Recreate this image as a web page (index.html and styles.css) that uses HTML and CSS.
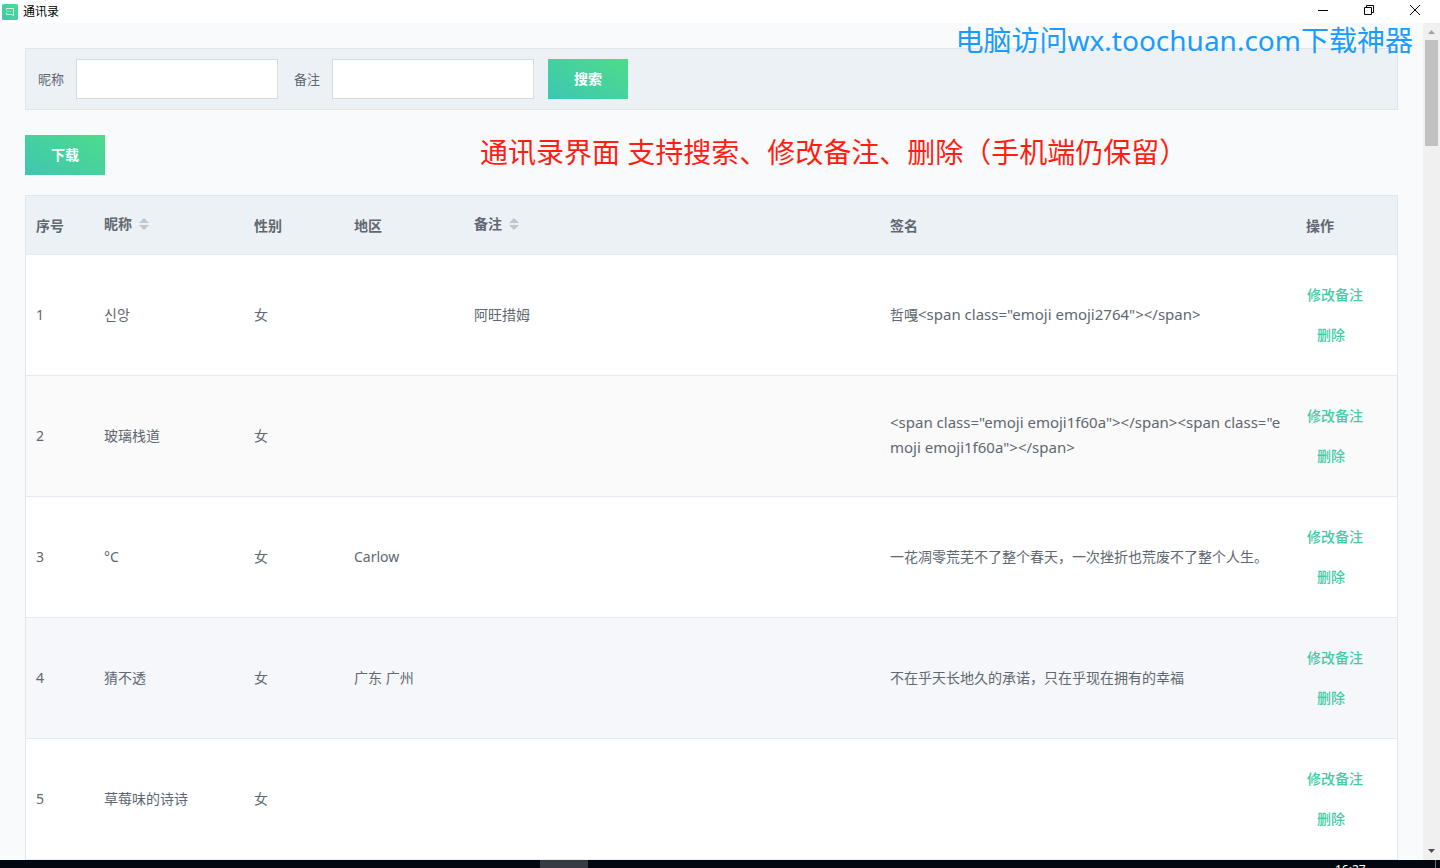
FILE: index.html
```html
<!DOCTYPE html>
<html lang="zh-CN">
<head>
<meta charset="utf-8">
<title>通讯录</title>
<link rel="stylesheet" href="styles.css">
</head>
<body>
<header class="titlebar">
  <svg class="app-icon" viewBox="0 0 16 16" aria-hidden="true">
    <defs><linearGradient id="brand" x1="0" y1="1" x2="1" y2="0"><stop offset="0" stop-color="#3ec6b0"/><stop offset="1" stop-color="#4ddc8c"/></linearGradient></defs>
    <rect width="16" height="16" rx="1.5" fill="url(#brand)"/>
    <path d="M4.500 6.500V4.500h7v7.500l-1.500-1.500h-5.500v-2M5.500 7.500h1M8 7.500h1" fill="none" stroke="#c5f3de" stroke-width="1"/>
  </svg>
  <h1 class="title">通讯录</h1>
  <div class="window-controls">
    <button type="button" class="window-button" aria-label="最小化"><svg viewBox="0 0 12 12"><path d="M1 6.500h10"/></svg></button>
    <button type="button" class="window-button" aria-label="还原"><svg viewBox="0 0 12 12"><path d="M1.500 3.500h7v7h-7zM3.500 3.500v-2h7v7h-2"/></svg></button>
    <button type="button" class="window-button" aria-label="关闭"><svg viewBox="0 0 12 12"><path d="M1 1l10 10M11 1L1 11"/></svg></button>
  </div>
</header>
<div class="viewport">
  <p class="promo">电脑访问wx.toochuan.com下载神器</p>
  <main class="content">
    <form class="search">
      <label class="search-label" for="nickname">昵称</label>
      <input class="search-input" id="nickname" type="text">
      <label class="search-label" for="remark">备注</label>
      <input class="search-input" id="remark" type="text">
      <button type="button" class="primary">搜索</button>
    </form>
    <div class="toolbar">
      <button type="button" class="primary">下载</button>
      <p class="notice">通讯录界面 支持搜索、修改备注、删除（手机端仍保留）</p>
    </div>
    <table class="contacts">
      <colgroup><col class="col-index"><col class="col-name"><col class="col-gender"><col class="col-region"><col><col><col class="col-actions"></colgroup>
      <thead>
        <tr>
          <th>序号</th>
          <th><span class="sortable">昵称<svg class="sort" viewBox="0 0 10 12" aria-hidden="true"><path d="M0 5l5-5 5 5zM0 7l5 5 5-5z"/></svg></span></th>
          <th>性别</th>
          <th>地区</th>
          <th><span class="sortable">备注<svg class="sort" viewBox="0 0 10 12" aria-hidden="true"><path d="M0 5l5-5 5 5zM0 7l5 5 5-5z"/></svg></span></th>
          <th>签名</th>
          <th>操作</th>
        </tr>
      </thead>
      <tbody>
        <tr><td>1</td><td>신앙</td><td>女</td><td></td><td>阿旺措姆</td><td>哲嘎<span class="markup">&lt;span class="emoji emoji2764"&gt;&lt;/span&gt;</span></td><td><div class="actions"><button type="button" class="link">修改备注</button><button type="button" class="link remove">删除</button></div></td></tr>
        <tr class="striped"><td>2</td><td>玻璃栈道</td><td>女</td><td></td><td></td><td><span class="markup">&lt;span class="emoji emoji1f60a"&gt;&lt;/span&gt;&lt;span class="emoji emoji1f60a"&gt;&lt;/span&gt;</span></td><td><div class="actions"><button type="button" class="link">修改备注</button><button type="button" class="link remove">删除</button></div></td></tr>
        <tr><td>3</td><td>°C</td><td>女</td><td>Carlow</td><td></td><td>一花凋零荒芜不了整个春天，一次挫折也荒废不了整个人生。</td><td><div class="actions"><button type="button" class="link">修改备注</button><button type="button" class="link remove">删除</button></div></td></tr>
        <tr class="hovered"><td>4</td><td>猜不透</td><td>女</td><td>广东 广州</td><td></td><td>不在乎天长地久的承诺，只在乎现在拥有的幸福</td><td><div class="actions"><button type="button" class="link">修改备注</button><button type="button" class="link remove">删除</button></div></td></tr>
        <tr><td>5</td><td>草莓味的诗诗</td><td>女</td><td></td><td></td><td></td><td><div class="actions"><button type="button" class="link">修改备注</button><button type="button" class="link remove">删除</button></div></td></tr>
      </tbody>
    </table>
  </main>
  <div class="scrollbar" aria-hidden="true">
    <svg class="arrow arrow-up" viewBox="0 0 17 17"><path d="M5 11l3.500-4 3.500 4z"/></svg>
    <div class="thumb"></div>
    <svg class="arrow arrow-down" viewBox="0 0 17 17"><path d="M5 6l3.500 4 3.500-4z"/></svg>
  </div>
</div>
<footer class="taskbar">
  <div class="task"></div>
  <time class="clock">16:27</time>
</footer>
</body>
</html>
```
FILE: styles.css
```css
* { box-sizing: border-box; }

body {
  display: flex;
  flex-direction: column;
  height: 100vh;
  margin: 0;
  overflow: hidden;
  background: #f9fafc;
  color: #606770;
  font: 14px/24px "Noto Sans", "Noto Sans CJK SC", "Noto Sans CJK KR", sans-serif;
}

button, input { font: inherit; }
h1, p { margin: 0; font-weight: 400; }

.titlebar {
  display: flex;
  align-items: center;
  flex: none;
  height: 23px;
  padding: 0 2px;
  background: #fff;
}
.app-icon { width: 16px; height: 16px; }
.title { margin-left: 5px; color: #000; font-size: 12px; line-height: 20px; }
.window-controls { display: flex; margin-left: auto; align-self: flex-start; }
.window-button {
  display: grid;
  place-items: center;
  width: 46px;
  height: 20px;
  padding: 0;
  border: 0;
  background: none;
}
.window-button svg { width: 12px; height: 12px; fill: none; stroke: #000; }

.viewport { position: relative; display: flex; flex: 1; min-height: 0; }
.content { flex: 1; min-width: 0; overflow: hidden; padding: 25px; }

.promo {
  position: absolute;
  top: 0;
  right: 27px;
  color: #1a9bff;
  font-size: 28px;
  line-height: 34px;
}

.search {
  display: flex;
  align-items: center;
  height: 62px;
  padding: 0 12px;
  border: 1px solid #dfe6ec;
  background: #ecf1f6;
}
.search-label { margin-right: 12px; font-size: 13px; }
.search-input {
  width: 202px;
  height: 40px;
  margin-right: 16px;
  padding: 0 10px;
  border: 1px solid #d2dae4;
  background: #fff;
}
.primary {
  width: 80px;
  height: 40px;
  padding: 0;
  border: 0;
  background: linear-gradient(30deg, #3ec6b2, #4ddc8c);
  color: #fff;
  font-weight: 700;
}
.search .primary { margin-left: -2px; }

.toolbar { display: flex; align-items: flex-start; height: 40px; margin: 25px 0 20px; }
.notice { margin-left: 375px; color: #ff1e12; font-size: 28px; line-height: 34px; white-space: nowrap; }

.contacts {
  width: 100%;
  table-layout: fixed;
  border: 1px solid #dfe6ec;
  border-spacing: 0;
  background: #fff;
}
.col-index { width: 68px; }
.col-name { width: 150px; }
.col-gender { width: 100px; }
.col-region { width: 120px; }
.col-actions { width: 101px; }
.contacts th, .contacts td {
  border-bottom: 1px solid #e6ebf3;
  text-align: left;
  word-break: break-all;
}
.contacts th { height: 59px; padding: 2px 10px 0; background: #ecf1f6; font-weight: 700; }
.contacts td { height: 121px; padding: 0 10px 2px; line-height: 25px; }
.contacts .striped td { background: #fafafa; }
.contacts .hovered td { background: #f5f7fb; }
.markup { font-size: 15px; }
.sortable { display: flex; align-items: center; padding-bottom: 4px; }
.sort { width: 10px; height: 12px; margin-left: 7px; fill: #c0c5cd; }

.actions { display: flex; flex-direction: column; align-items: flex-start; }
.link {
  height: 40px;
  padding: 0 1px;
  border: 0;
  background: none;
  color: #42cba6;
  font-weight: 500;
  white-space: nowrap;
}
.remove { margin-left: 10px; }

.scrollbar { display: flex; flex-direction: column; flex: none; width: 17px; background: #f0f0f0; }
.arrow { width: 17px; height: 17px; }
.arrow-up { fill: #a3a3a3; }
.arrow-down { margin-top: auto; fill: #505050; }
.thumb { height: 106px; margin: 0 2px; background: #c1c1c1; }

.taskbar {
  display: flex;
  justify-content: space-between;
  flex: none;
  height: 8px;
  overflow: hidden;
  padding-left: 540px;
  background: #030810;
}
.task { width: 48px; background: #373b42; }
.clock {
  width: 101px;
  height: 20px;
  margin-right: 4px;
  border-right: 1px solid #70757b;
  color: #fff;
  font-size: 12px;
  line-height: 20px;
}
```
